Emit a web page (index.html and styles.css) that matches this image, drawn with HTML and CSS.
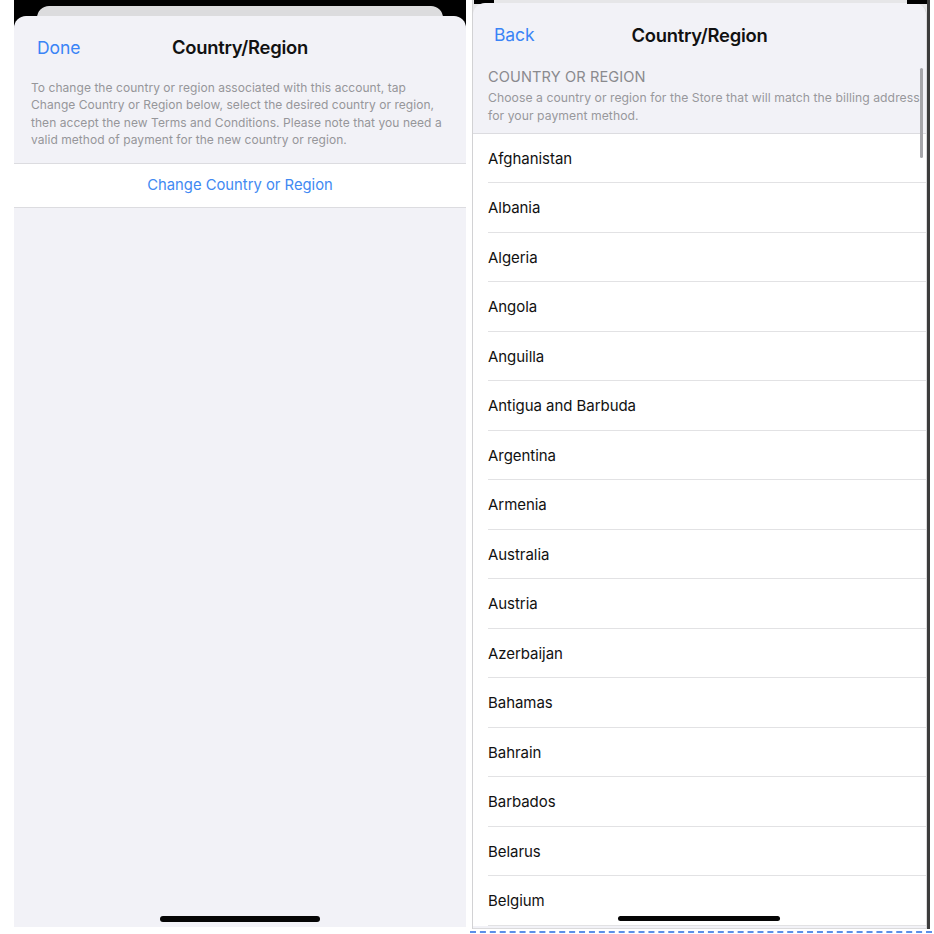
FILE: index.html
```html
<!DOCTYPE html>
<html lang="en">
<head>
<meta charset="utf-8">
<title>Country/Region</title>
<link rel="stylesheet" href="styles.css">
</head>
<body>
<div class="screens">
  <section class="left">
    <div class="peek"></div>
    <div class="sheet">
      <header class="nav">
        <span class="nav-btn">Done</span>
        <h1 class="nav-title">Country/Region</h1>
      </header>
      <p class="note">To change the country or region associated with this account, tap Change Country or Region below, select the desired country or region, then accept the new Terms and Conditions. Please note that you need a valid method of payment for the new country or region.</p>
      <div class="action-group">
        <span class="action">Change Country or Region</span>
      </div>
      <div class="home-bar"></div>
    </div>
  </section>

  <div class="right-wrap">
    <section class="right">
      <div class="sheet sheet-right">
        <header class="nav nav-right">
          <span class="nav-btn">Back</span>
          <h1 class="nav-title">Country/Region</h1>
        </header>
        <div class="section-head">
          <div class="section-title">COUNTRY OR REGION</div>
          <div class="section-desc">Choose a country or region for the Store that will match the billing address for your payment method.</div>
        </div>
        <ul class="list">
          <li>Afghanistan</li>
          <li>Albania</li>
          <li>Algeria</li>
          <li>Angola</li>
          <li>Anguilla</li>
          <li>Antigua and Barbuda</li>
          <li>Argentina</li>
          <li>Armenia</li>
          <li>Australia</li>
          <li>Austria</li>
          <li>Azerbaijan</li>
          <li>Bahamas</li>
          <li>Bahrain</li>
          <li>Barbados</li>
          <li>Belarus</li>
          <li>Belgium</li>
        </ul>
        <div class="scrollbar"></div>
        <div class="home-bar home-bar-right"></div>
      </div>
    </section>
  </div>
</div>
</body>
</html>
```

FILE: styles.css
```css
* { box-sizing: border-box; }

html, body {
  margin: 0;
  padding: 0;
  background: #ffffff;
  font-family: "Inter", "Liberation Sans", sans-serif;
  -webkit-font-smoothing: antialiased;
}

.screens {
  display: flex;
  align-items: flex-start;
  padding-left: 14px;
  width: 934px;
  height: 934px;
  overflow: hidden;
}

/* ---------- left screen ---------- */
.left {
  width: 452px;
  height: 927px;
  background: #000;
  display: flex;
  flex-direction: column;
}

.peek {
  height: 12px;
  margin: 6px 23px 0;
  background: #dcdcde;
  border-radius: 12px 12px 0 0;
  flex: none;
}

.sheet {
  position: relative;
  flex: 1;
  margin-top: -2px;
  background: #f2f2f7;
  border-radius: 12px 12px 0 0;
  overflow: hidden;
}

.nav {
  position: relative;
  display: flex;
  align-items: center;
  height: 62px;
  padding: 0 23px;
}

.nav-btn {
  font-size: 17.5px;
  color: #3a84f6;
  letter-spacing: -0.1px;
}

.nav-title {
  position: absolute;
  left: 0;
  right: 0;
  margin: 0;
  text-align: center;
  font-size: 18.4px;
  font-weight: 600;
  color: #111;
  letter-spacing: -0.25px;
  pointer-events: none;
}

.note {
  margin: 0;
  padding: 1px 22px 0 17px;
  font-size: 12px;
  line-height: 17.4px;
  color: #96969a;
  letter-spacing: 0.05px;
}

.action-group {
  margin-top: 14px;
  height: 45px;
  background: #fff;
  border-top: 1px solid #dcdce0;
  border-bottom: 1px solid #dcdce0;
  display: flex;
  align-items: center;
  justify-content: center;
}

.action {
  font-size: 14.8px;
  color: #4189f2;
}

.home-bar {
  position: absolute;
  left: 146px;
  bottom: 5px;
  width: 160px;
  height: 6px;
  border-radius: 3px;
  background: #050505;
}

/* ---------- right screen ---------- */
.right-wrap {
  margin-left: 4px;
  width: 462px;
  height: 933px;
  border-bottom: 2px dashed #5b8fe9;
  padding-left: 2px;
}

.right {
  position: relative;
  width: 458px;
  height: 929px;
  background: #e6e6e8;
  border-left: 1px solid #d2d2d4;
  border-right: 3px solid #3c3c3c;
  padding-top: 3px;
  display: flex;
  flex-direction: column;
}

.right::before,
.right::after {
  content: "";
  position: absolute;
  top: 0;
  width: 20px;
  height: 4px;
  background: #000;
}
.right::before { left: 1px; }
.right::after { right: 0; }

.sheet-right {
  margin-top: 0;
  border-right: 1px solid #dadadc;
  border-bottom: 1px solid #dadadc;
}

.nav-right {
  height: 57px;
  padding: 5px 21px 0;
  align-items: center;
}

.nav-right .nav-title {
  top: 21px;
}

.section-head {
  padding: 5px 4px 0 15px;
  height: 74px;
  border-bottom: 1px solid #dcdce0;
}

.section-title {
  font-size: 14.6px;
  color: #8a8a8e;
  line-height: 24px;
  letter-spacing: 0.1px;
}

.section-desc {
  font-size: 12.2px;
  line-height: 17.5px;
  color: #98989c;
  letter-spacing: 0.05px;
}

.list {
  list-style: none;
  margin: 0;
  padding: 0 0 0 15px;
  background: #fff;
}

.list li {
  height: 49.47px;
  line-height: 49.5px;
  font-size: 15px;
  color: #111;
  border-bottom: 1px solid #e2e2e4;
  letter-spacing: -0.05px;
}

.scrollbar {
  position: absolute;
  right: 3px;
  top: 65px;
  width: 3px;
  height: 90px;
  border-radius: 2px;
  background: #a6a6aa;
}

.home-bar-right {
  left: 145px;
  bottom: 7px;
  width: 162px;
  height: 5px;
}
```
